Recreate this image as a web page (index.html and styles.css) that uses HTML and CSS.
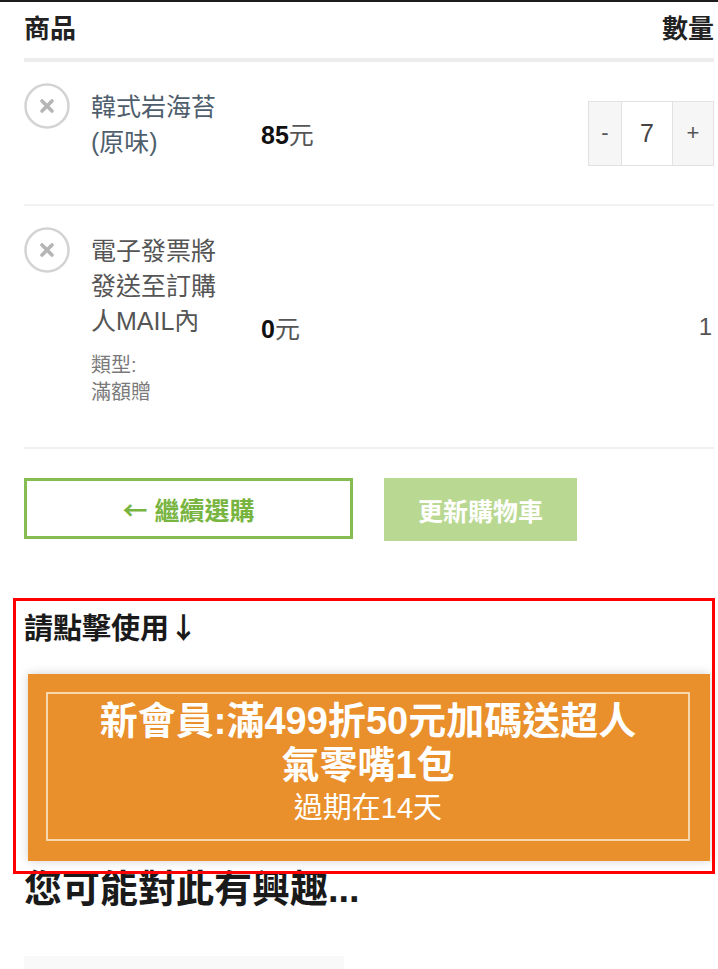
FILE: index.html
```html
<!DOCTYPE html>
<html lang="zh-TW">
<head>
  <meta charset="UTF-8">
  <title>購物車</title>
  <link rel="stylesheet" href="styles.css">
</head>
<body>
  <div class="page">
    <div class="cart-head">
      <span>商品</span>
      <span>數量</span>
    </div>

    <div class="cart-row">
      <span class="remove">
        <svg width="46" height="46" viewBox="0 0 46 46">
          <circle cx="23" cy="23" r="21.5" fill="none" stroke="#d3d3d3" stroke-width="2.5"/>
          <path d="M18 18 L28 28 M28 18 L18 28" stroke="#b5b5b5" stroke-width="3.6" stroke-linecap="round"/>
        </svg>
      </span>
      <div class="item-name">
        <a class="item-link">韓式岩海苔(原味)</a>
      </div>
      <div class="price"><b>85</b>元</div>
      <div class="qty">
        <button class="qty-btn minus">-</button>
        <span class="qty-input">7</span>
        <button class="qty-btn plus">+</button>
      </div>
    </div>

    <div class="cart-row gift">
      <span class="remove">
        <svg width="46" height="46" viewBox="0 0 46 46">
          <circle cx="23" cy="23" r="21.5" fill="none" stroke="#d3d3d3" stroke-width="2.5"/>
          <path d="M18 18 L28 28 M28 18 L18 28" stroke="#b5b5b5" stroke-width="3.6" stroke-linecap="round"/>
        </svg>
      </span>
      <div class="item-name">
        <div class="item-text">電子發票將發送至訂購人MAIL內</div>
        <div class="item-meta">類型:<br>滿額贈</div>
      </div>
      <div class="price"><b>0</b>元</div>
      <div class="qty-fixed">1</div>
    </div>

    <div class="actions">
      <button class="btn-outline"><span class="arrow">←</span> 繼續選購</button>
      <button class="btn-update">更新購物車</button>
    </div>

    <div class="promo">
      <div class="promo-title">請點擊使用<span class="arrow">↓</span></div>
      <div class="coupon">
        <div class="coupon-inner">
          <div class="coupon-main">新會員:滿499折50元加碼送超人氣零嘴1包</div>
          <div class="coupon-sub">過期在14天</div>
        </div>
      </div>
      <div class="promo-mark"></div>
    </div>

    <h2 class="related">您可能對此有興趣...</h2>
    <div class="related-row">
      <div class="related-card"></div>
    </div>
  </div>
</body>
</html>
```

FILE: styles.css
```css
body {
  margin: 0;
  background: #fff;
  border-top: 2px solid #1c1c1c;
  font-family: "Liberation Sans", "Noto Sans CJK TC", sans-serif;
  color: #333;
  overflow: hidden;
}
.page {
  padding: 0 4px 0 24px;
}
.cart-head {
  display: flex;
  justify-content: space-between;
  padding: 12px 0 14px;
  font-size: 26px;
  line-height: 30px;
  font-weight: bold;
  color: #222;
  border-bottom: 4px solid #ededed;
}
.cart-row {
  display: flex;
  align-items: center;
  min-height: 142px;
  border-bottom: 2px solid #f1f1f1;
}
.cart-row.gift {
  min-height: 241px;
}
.remove {
  align-self: flex-start;
  margin-top: 21px;
  margin-right: 21px;
  width: 46px;
  height: 46px;
  display: flex;
}
.item-name {
  align-self: flex-start;
  margin-top: 28px;
  width: 145px;
  margin-right: 25px;
}
.item-link,
.item-text {
  font-size: 25px;
  line-height: 35px;
}
.item-link {
  color: #4f5e6d;
}
.item-text {
  color: #555;
}
.item-meta {
  margin-top: 13px;
  font-size: 20px;
  line-height: 27px;
  color: #7a7a7a;
}
.price {
  flex: 1;
  font-size: 25px;
  color: #555;
}
.price b {
  color: #111;
}
.qty {
  display: flex;
  height: 65px;
  border: 1px solid #e2e2e2;
  box-sizing: border-box;
}
.qty-btn {
  border: none;
  background: #f6f6f6;
  color: #555;
  font-family: inherit;
  font-size: 22px;
  padding: 0;
}
.qty-btn.minus {
  width: 33px;
  border-right: 1px solid #e2e2e2;
}
.qty-btn.plus {
  width: 41px;
  border-left: 1px solid #e2e2e2;
}
.qty-input {
  width: 50px;
  display: flex;
  align-items: center;
  justify-content: center;
  font-size: 25px;
  color: #444;
}
.qty-fixed {
  font-size: 24px;
  color: #555;
  padding-right: 2px;
}
.arrow {
  font-family: "Noto Sans CJK TC", sans-serif;
}
.actions {
  display: flex;
  gap: 31px;
  margin-top: 29px;
}
.actions button {
  font-family: inherit;
  font-size: 25px;
  font-weight: bold;
  cursor: pointer;
}
.btn-outline {
  width: 329px;
  height: 61px;
  border: 3px solid #86bd52;
  background: #fff;
  color: #78b440;
}
.btn-update {
  width: 193px;
  height: 63px;
  border: none;
  background: #b9d891;
  color: #fff;
}
.promo {
  position: relative;
  margin-top: 57px;
}
.promo-title {
  padding-top: 8px;
  font-size: 29px;
  line-height: 40px;
  font-weight: bold;
  color: #1a1a1a;
}
.coupon {
  margin: 25px 4px 0;
  padding: 18px 20px 20px 18px;
  background: #e98f2b;
  box-shadow: 0 0 10px rgba(0, 0, 0, 0.18);
}
.coupon-inner {
  border: 2px solid #f7d7ad;
  padding: 5px 48px 10px;
  text-align: center;
  color: #fff;
}
.coupon-main {
  font-size: 38px;
  line-height: 44px;
  font-weight: bold;
}
.coupon-sub {
  font-size: 29px;
  line-height: 42px;
}
.promo-mark {
  position: absolute;
  left: -11px;
  right: -1px;
  top: 0;
  bottom: -13px;
  border: 3px solid #f00;
  pointer-events: none;
}
.related {
  margin: 4px 0 0;
  font-size: 38px;
  line-height: 48px;
  font-weight: bold;
  color: #1a1a1a;
}
.related-row {
  margin-top: 43px;
}
.related-card {
  width: 320px;
  height: 30px;
  background: #f9f9f9;
}
```
